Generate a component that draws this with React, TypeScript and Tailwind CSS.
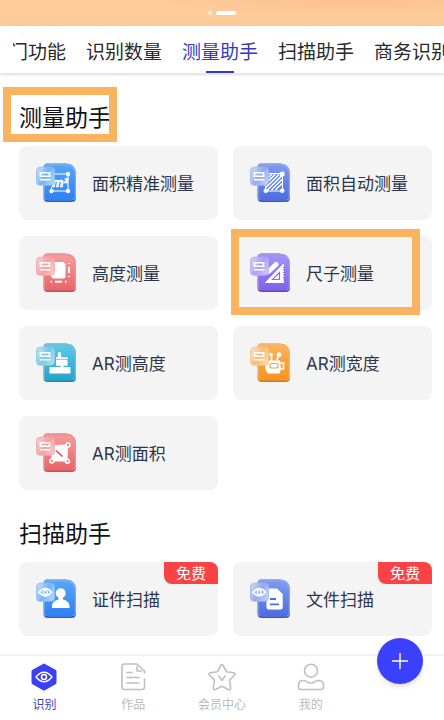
import { useId, type ReactNode } from 'react'
import clsx from 'clsx'

interface Tool {
  name: string
  icon: string
  free?: boolean
  marked?: boolean
}

interface Section {
  title: string
  marked?: boolean
  tools: Tool[]
}

const tabs = ['门功能', '识别数量', '测量助手', '扫描助手', '商务识别']

const sections: Section[] = [
  {
    title: '测量助手',
    marked: true,
    tools: [
      { name: '面积精准测量', icon: 'area' },
      { name: '面积自动测量', icon: 'areaAuto' },
      { name: '高度测量', icon: 'height' },
      { name: '尺子测量', icon: 'ruler', marked: true },
      { name: 'AR测高度', icon: 'arHeight' },
      { name: 'AR测宽度', icon: 'arWidth' },
      { name: 'AR测面积', icon: 'arArea' },
    ],
  },
  {
    title: '扫描助手',
    tools: [
      { name: '证件扫描', icon: 'idCard', free: true },
      { name: '文件扫描', icon: 'file', free: true },
    ],
  },
]

// top / bottom gradient stops, darker base edge, front badge tint
const palette: Record<string, { from: string; to: string; edge: string; tint: string }> = {
  blue: { from: '#55a6f8', to: '#2f80f3', edge: '#1c66d8', tint: '#8dc0f6' },
  indigo: { from: '#7b9bf0', to: '#4d6ce2', edge: '#3c58c8', tint: '#a3b5f0' },
  red: { from: '#f79a9c', to: '#e9656a', edge: '#cd4d55', tint: '#f2a4a6' },
  purple: { from: '#a294f6', to: '#7d62ec', edge: '#6244d2', tint: '#b3a8f2' },
  cyan: { from: '#5cc8e6', to: '#24a5ca', edge: '#128bb0', tint: '#8accdf' },
  orange: { from: '#fdb35c', to: '#f7931f', edge: '#dd7a0c', tint: '#f8c48c' },
}

const glyphs: Record<string, { color: string; eye?: boolean; art: ReactNode }> = {
  area: {
    color: 'blue',
    art: (
      <>
        <path d="M19 11H32V28H15.5V24" fill="none" stroke="#fff" strokeWidth="1" />
        <circle cx="32" cy="11" r="2.2" />
        <circle cx="15.5" cy="28" r="2.2" />
        <circle cx="32" cy="28" r="2.2" />
        <text
          x="16"
          y="23.5"
          fontSize="13"
          fontWeight="700"
          fontStyle="italic"
          fontFamily="Liberation Sans, sans-serif"
          stroke="#fff"
          strokeWidth="0.6"
        >
          m²
        </text>
      </>
    ),
  },
  areaAuto: {
    color: 'indigo',
    art: (
      <>
        <path d="M17 10.5H32.5V28H15.5V18" fill="none" stroke="#fff" strokeWidth="1" />
        <path
          d="M17 16L22 11M16 20.5L25.5 11M16 24.5L29 11.5M17.5 27L32 12.5M21.5 27L32 16.5M25.5 27L32 20.5"
          fill="none"
          stroke="#fff"
          strokeWidth="1.5"
        />
        <circle cx="32.2" cy="11" r="2.5" />
        <circle cx="15.8" cy="27.7" r="2.3" />
        <circle cx="32.2" cy="27.7" r="2.3" />
      </>
    ),
  },
  height: {
    color: 'red',
    art: (
      <>
        <path d="M15 9H27.5L29.5 11V23.5Q29.5 25.5 27.5 25.5H17L15 23.5Z" />
        <path d="M33 10V11M33 14V20M33 23V24M14.5 28.7H16M19 28.7H26M29 28.7H30.5" fill="none" stroke="#fff" strokeWidth="2" />
      </>
    ),
  },
  ruler: {
    color: 'purple',
    art: (
      <>
        <path d="M18.5 18.5L26 11.5" fill="none" stroke="#fff" strokeWidth="5" strokeLinecap="round" />
        <path d="M15.5 29.5L33.5 11V29.5Z" stroke="#fff" strokeLinejoin="round" />
        <path d="M22.5 26.5L29.5 19.5V26.5Z" fill="#fff" stroke="#8a71ee" strokeWidth="1.2" />
        <path d="M33.7 14V29" stroke="#8a71ee" strokeWidth="1.5" strokeDasharray="1 1.5" />
        <path d="M16.5 26L31 11.5" stroke="#8a71ee" strokeWidth="0.9" />
      </>
    ),
  },
  arHeight: {
    color: 'cyan',
    art: (
      <>
        <rect x="13.5" y="24" width="21" height="6.5" rx="0.6" />
        <path d="M20 14H31.5V22.8H20Z" />
        <path d="M23.5 10.5V14" stroke="#fff" strokeWidth="3.2" strokeLinecap="round" />
        <path d="M20 16.3H31.5" stroke="#4dbbd9" strokeWidth="0.8" />
        <path d="M26 22.5V25" stroke="#fff" strokeWidth="3" />
      </>
    ),
  },
  arWidth: {
    color: 'orange',
    art: (
      <>
        <path d="M14.5 17.5H30L31 26L29.5 30.5H17.5L15.5 26Z" />
        <path d="M29.5 20H33.5V26H30" fill="none" stroke="#fff" strokeWidth="1.7" />
        <rect x="20" y="20.5" width="8" height="4.5" rx="2" fill="none" stroke="#f8a33e" strokeWidth="1.2" />
        <path d="M21.5 18V12M26.5 17.5L28.5 13" stroke="#fff" strokeWidth="1.7" />
        <circle cx="21" cy="11.5" r="1.8" />
        <circle cx="29" cy="11.7" r="2.4" />
      </>
    ),
  },
  arArea: {
    color: 'red',
    art: (
      <>
        <path d="M16 12L32 11.5L31.5 28.5L15 28.5Z" />
        <circle cx="32" cy="12" r="2.7" />
        <circle cx="15.8" cy="28" r="2.7" />
        <circle cx="31.5" cy="28.2" r="2.7" />
        <path d="M20 17.5L26.5 23.5" stroke="#c8545c" strokeWidth="1.6" />
        <circle cx="32" cy="12" r="1" fill="#e9656a" />
        <circle cx="15.8" cy="28" r="1" fill="#e9656a" />
        <circle cx="31.5" cy="28.2" r="1" fill="#e9656a" />
      </>
    ),
  },
  idCard: {
    color: 'blue',
    eye: true,
    art: (
      <>
        <circle cx="24.7" cy="14.2" r="5" />
        <path d="M22.5 17H27V20.5C31 21.5 33.5 23.5 33.5 27.5V29H16V27.5C16 23.5 18.5 21.5 22.5 20.5Z" />
      </>
    ),
  },
  file: {
    color: 'indigo',
    eye: true,
    art: (
      <>
        <path d="M18 9.5H27L32.7 15V28.5Q32.7 30.5 30.7 30.5H18.5Q16.5 30.5 16.5 28.5V11Z" />
        <path d="M20 20H26M20 25.3H29" stroke="#4d6ce2" strokeWidth="1.8" />
      </>
    ),
  },
}

function ToolIcon({ name }: { name: string }) {
  const id = useId()
  const { color, eye, art } = glyphs[name]
  const c = palette[color]
  return (
    <svg viewBox="0 0 40 40" className="size-10 shrink-0" fill="#fff" aria-hidden="true">
      <defs>
        <linearGradient id={`${id}-base`} x1="0" y1="0" x2="0" y2="1">
          <stop offset="0" stopColor={c.from} />
          <stop offset="1" stopColor={c.to} />
        </linearGradient>
        <linearGradient id={`${id}-badge`} x1="0" y1="0.2" x2="1" y2="0.8">
          <stop offset="0" stopColor="#fff" stopOpacity="0.3" />
          <stop offset="0.5" stopColor={c.from} stopOpacity="0.5" />
          <stop offset="1" stopColor="#fff" stopOpacity="0.35" />
        </linearGradient>
      </defs>
      <path d="M11 0.5H29Q40 0.5 40 12V34.5Q40 39 35.5 39H12Q7.5 39 7.5 34.5V4.5Q7.5 0.5 11 0.5Z" fill={c.edge} />
      <path d="M11 0.5H29Q40 0.5 40 12V33Q40 37.2 35.5 37.2H12Q7.5 37.2 7.5 33V4.5Q7.5 0.5 11 0.5Z" fill={c.tint} fillOpacity="0.8" />
      <path d="M11 2.5H28.5Q38.8 2.5 38.8 12.5V33Q38.8 37 35 37H12.5Q8.7 37 8.7 33V5Q8.7 2.5 11 2.5Z" fill={`url(#${id}-base)`} />
      {art}
      <rect x="0.5" y="4.2" width="18" height="18" rx="3.5" fill={c.tint} fillOpacity="0.9" />
      <rect x="0.5" y="4.2" width="18" height="18" rx="3.5" fill={`url(#${id}-badge)`} stroke={c.tint} strokeWidth="0.8" />
      {eye ? (
        <>
          <path d="M3 13.3Q9.3 6 15.6 13.3Q9.3 20.5 3 13.3Z" fill="none" stroke="#fff" strokeWidth="1.6" />
          <circle cx="9.3" cy="13.3" r="1.9" fill="none" stroke="#fff" strokeWidth="1.4" />
        </>
      ) : (
        <path d="M3.5 9.7H14.5M3.5 13.2H14.5M4 16.7H14.5M4.5 9V13M13.5 9V13" fill="none" stroke="#fff" strokeWidth="1.6" />
      )}
    </svg>
  )
}

function ToolCard({ tool }: { tool: Tool }) {
  return (
    <button type="button" className="relative flex items-center gap-4 rounded-lg bg-[#f4f4f4] p-[17px] text-left">
      <ToolIcon name={tool.icon} />
      <span className="pt-[2px] font-[Inter,'Noto_Sans_CJK_SC',sans-serif] text-[17px] leading-6 whitespace-nowrap text-[#2d3549]">
        {tool.name}
      </span>
      {tool.free && (
        <span className="absolute top-0 right-0 rounded-tr-lg rounded-bl-lg bg-[#fb4345] px-3 text-[15px] leading-[22px] text-white">
          免费
        </span>
      )}
      {tool.marked && (
        <span className="pointer-events-none absolute -top-[7px] right-3 -bottom-[5px] -left-[2px] border-8 border-[#fab35f]" />
      )}
    </button>
  )
}

const navItems = [
  {
    label: '识别',
    active: true,
    icon: (
      <>
        <path d="M14 0.5L25.5 6.8Q26.5 7.5 26.5 8.7V19.3Q26.5 20.5 25.5 21.2L14 27.7L2.5 21.2Q1.5 20.5 1.5 19.3V8.7Q1.5 7.5 2.5 6.8Z" fill="#3b3ff5" stroke="none" />
        <path d="M6 14Q14 4.5 22 14Q14 23.5 6 14Z" stroke="#fff" strokeWidth="1.5" />
        <circle cx="14" cy="14" r="2.5" stroke="#fff" strokeWidth="1.5" />
      </>
    ),
  },
  {
    label: '作品',
    icon: (
      <>
        <path d="M25.5 16V24Q25.5 26.5 23 26.5H5.5Q3 26.5 3 24V3.5Q3 1 5.5 1H18L25.5 8V10" />
        <path d="M18 3.5V8H22.5M8 9.5H13M8 14.5H20M8 20H20" />
      </>
    ),
  },
  {
    label: '会员中心',
    icon: (
      <>
        <path d="M12.8 2.5Q14 0.5 15.2 2.5L18.5 8.7L25.5 9.8Q28 10.3 26.5 12L21.5 17.3L22.7 25Q22.8 27.5 20.5 26.5L14 23.2L7.5 26.5Q5.2 27.5 5.3 25L6.5 17.3L1.5 12Q0 10.3 2.5 9.8L9.5 8.7Z" />
        <path d="M11 13L14 17.5L17 13" />
      </>
    ),
  },
  {
    label: '我的',
    icon: (
      <>
        <circle cx="14" cy="7.7" r="6.5" />
        <path d="M1.5 24V22.5Q1.5 17.5 6.5 17.5Q8.5 17.5 10.5 19Q14 21 17.5 19Q19.5 17.5 21.5 17.5Q26.5 17.5 26.5 22.5V24Q26.5 26.5 24 26.5H4Q1.5 26.5 1.5 24Z" />
      </>
    ),
  },
]

export default function App() {
  return (
    <div className="flex min-h-screen flex-col bg-white font-['Noto_Sans_CJK_SC',sans-serif]">
      <div className="flex h-[26px] items-center justify-center gap-1 bg-[#fecb9b] bg-[radial-gradient(ellipse_at_80%_0%,#fdc08f,transparent_40%)]">
        <span className="size-1 rounded-full bg-white/60" />
        <span className="h-1 w-5 rounded-full bg-white" />
      </div>

      <nav className="relative z-10 h-12 border-b border-gray-200 bg-white pl-[13px] shadow-sm">
        <div className="h-full overflow-hidden">
          <div className="-ml-1 flex h-full gap-5">
            {tabs.map(tab => (
              <button
                key={tab}
                type="button"
                className={clsx(
                  'relative h-full shrink-0 pt-[2px] text-[19px] leading-7 whitespace-nowrap',
                  tab === '测量助手' ? 'text-[#3439c4]' : 'text-[#2a2a2a]',
                )}
              >
                {tab}
                {tab === '测量助手' && (
                  <span className="absolute inset-x-6 bottom-0 h-[2px] bg-[#3439c4]" />
                )}
              </button>
            ))}
          </div>
        </div>
      </nav>

      <main className="flex-1 pr-3 pb-[18px] pl-[19px]">
        {sections.map(section => (
          <section key={section.title} className="pt-[27px]">
            <div className="relative mb-[15px] w-fit">
              <h2 className="text-[23px] leading-[30px] text-[#111]">{section.title}</h2>
              {section.marked && (
                <span className="pointer-events-none absolute -top-[14px] -right-[6px] -bottom-[11px] -left-4 border-8 border-[#fab35f]" />
              )}
            </div>
            <div className="grid grid-cols-2 gap-x-[15px] gap-y-4">
              {section.tools.map(tool => (
                <ToolCard key={tool.name} tool={tool} />
              ))}
            </div>
          </section>
        ))}
      </main>

      <footer className="relative grid grid-cols-5 border-t-2 border-[#f3f3f3] bg-white pt-[7px] pb-2">
        {navItems.map(item => (
          <button key={item.label} type="button" className="flex flex-col items-center gap-[5px]">
            <svg
              viewBox="0 0 28 28"
              className="size-7"
              fill="none"
              stroke="#bfbfc4"
              strokeWidth="1.6"
              strokeLinecap="round"
              strokeLinejoin="round"
              aria-hidden="true"
            >
              {item.icon}
            </svg>
            <span className={clsx('text-xs leading-4', item.active ? 'text-[#3b3fc4]' : 'text-[#b9b9be]')}>
              {item.label}
            </span>
          </button>
        ))}
        <div className="relative">
          <button
            type="button"
            aria-label="添加"
            className="absolute inset-x-0 -top-[25px] mx-auto flex size-[46px] items-center justify-center rounded-full bg-[#3a40fc] shadow-md"
          >
            <svg viewBox="0 0 16 16" className="size-4" stroke="#fff" strokeWidth="1.4" aria-hidden="true">
              <path d="M8 0V16M0 8H16" />
            </svg>
          </button>
        </div>
      </footer>
    </div>
  )
}
